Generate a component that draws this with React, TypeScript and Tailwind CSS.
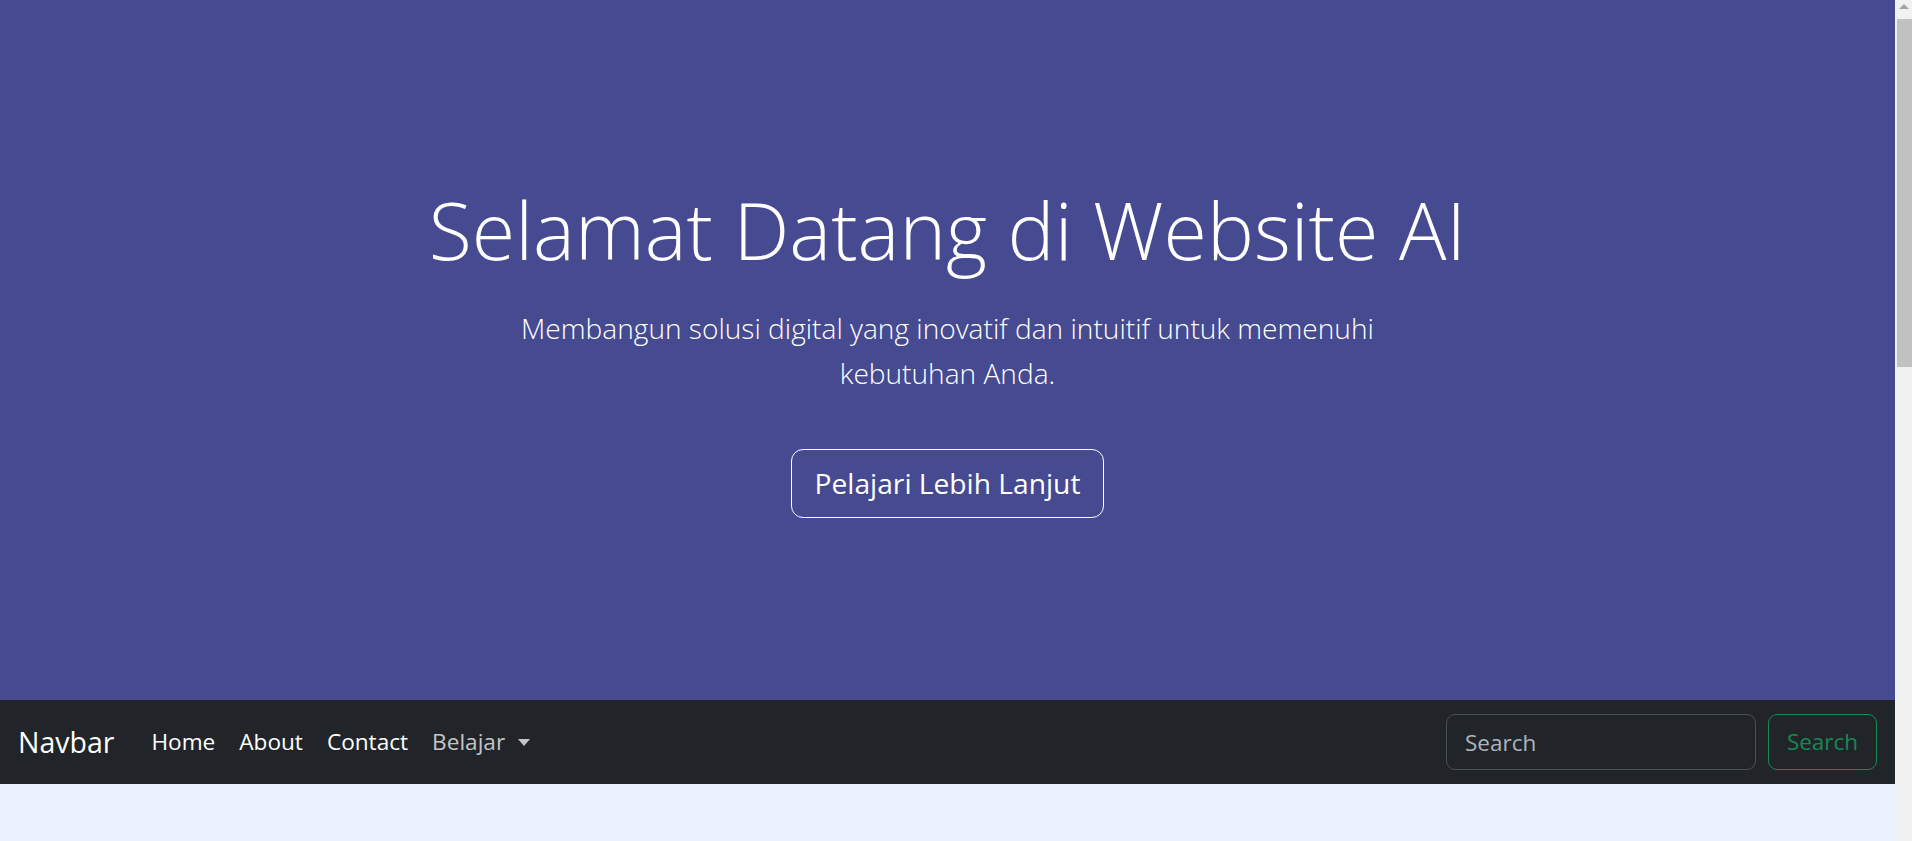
import React from "react";

const font = { fontFamily: '"Open Sans", "Noto Sans", sans-serif' };

const NavBar: React.FC = () => {
	return (
		<nav className="h-[84px] shrink-0 bg-[#212529] flex items-center justify-between px-[18px]">
			<div className="flex items-center">
				<a className="text-[28.5px] text-white mr-[37px] leading-none">Navbar</a>
				<ul className="flex items-center gap-[24px] text-[22.6px] leading-none">
					<li className="text-white">Home</li>
					<li className="text-white">About</li>
					<li className="text-white">Contact</li>
					<li className="text-[#c4c5c6] flex items-center">
						Belajar
						<span className="ml-[13px] w-0 h-0 border-l-[6px] border-r-[6px] border-t-[7px] border-l-transparent border-r-transparent border-t-[#c4c5c6]" />
					</li>
				</ul>
			</div>
			<form className="flex items-center gap-[12px]">
				<input
					placeholder="Search"
					className="w-[310px] h-[56px] rounded-[9px] border border-[#495057] bg-[#212529] px-[18px] text-[22.5px] text-white placeholder:text-[#adb5bd] outline-none"
					style={font}
				/>
				<button
					type="button"
					className="w-[109px] h-[56px] rounded-[9px] border border-[#198754] text-[22.5px] text-[#198754]"
					style={font}
				>
					Search
				</button>
			</form>
		</nav>
	);
};

// scrollbar jendela browser di sisi kanan
const ScrollBar: React.FC = () => (
	<div className="w-[17px] shrink-0 bg-[#f1f1f1] flex flex-col items-end">
		<div className="w-full h-[19px] flex justify-center pt-[4px]">
			<span className="w-0 h-0 border-l-[5px] border-r-[5px] border-b-[5px] border-l-transparent border-r-transparent border-b-[#a3a3a3]" />
		</div>
		<div className="w-[15px] h-[348px] bg-[#c1c1c1]" />
	</div>
);

export default function App() {
	return (
		<div className="h-[841px] flex overflow-hidden" style={font}>
			<main className="flex-1 flex flex-col bg-[#e8f1fd]">
				{/* Hero */}
				<section className="h-[700px] shrink-0 bg-[#464a90] flex flex-col items-center pt-[183px] text-white">
					<h1 className="text-[79px] font-light leading-[1.2]">Selamat Datang di Website AI</h1>
					<p className="mt-[28px] w-[880px] text-center text-[28.1px] font-light leading-[45px]">
						Membangun solusi digital yang inovatif dan intuitif untuk memenuhi kebutuhan Anda.
					</p>
					<button className="mt-[53px] w-[313px] h-[69px] rounded-[12px] border border-white text-[28.2px]">
						Pelajari Lebih Lanjut
					</button>
				</section>
				<NavBar />
			</main>
			<ScrollBar />
		</div>
	);
}
